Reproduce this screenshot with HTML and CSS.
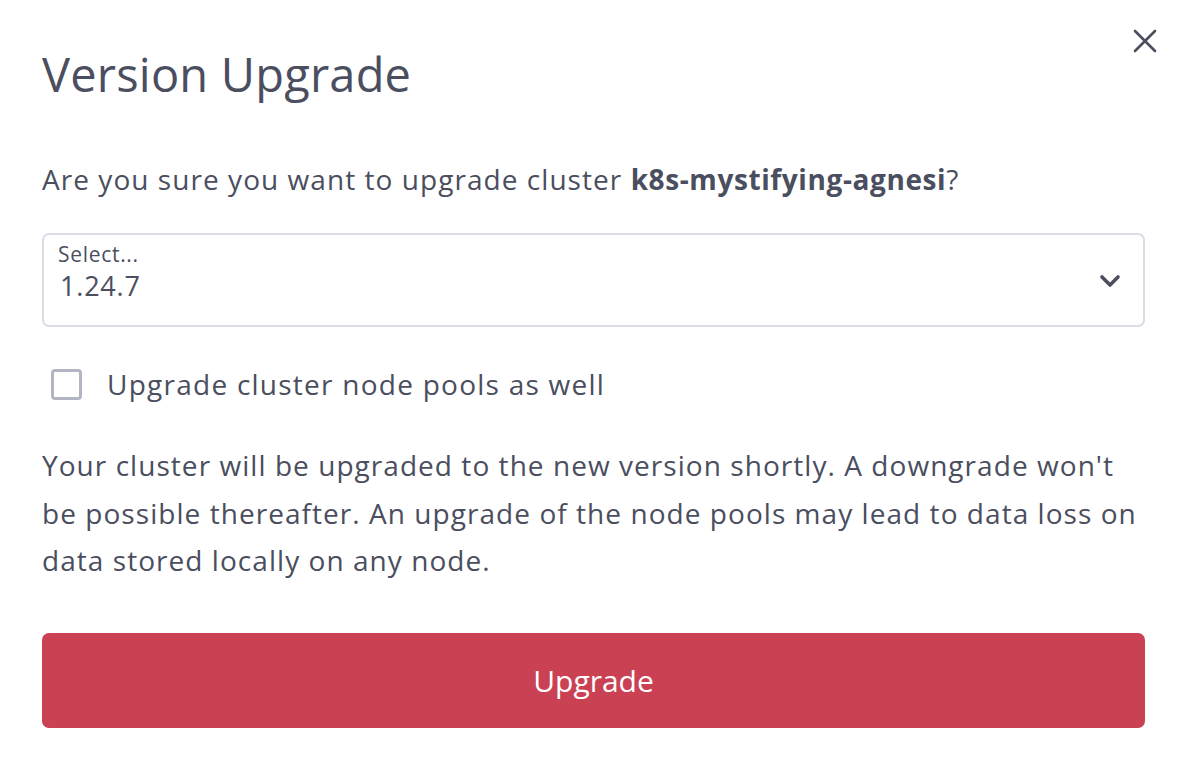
FILE: index.html
```html
<!DOCTYPE html>
<html>
<head>
<meta charset="utf-8">
<link rel="stylesheet" href="styles.css">
</head>
<body>
<div class="modal">
  <button class="close" aria-label="Close">
    <svg width="26" height="26" viewBox="0 0 26 26"><path d="M3 3 L23 23 M23 3 L3 23" stroke="#4a4e5e" stroke-width="2.6" stroke-linecap="round"/></svg>
  </button>
  <h1 class="title">Version Upgrade</h1>
  <p class="question">Are you sure you want to upgrade cluster <strong>k8s-mystifying-agnesi</strong>?</p>
  <div class="select">
    <div class="select-values">
      <span class="select-label">Select...</span>
      <span class="select-value">1.24.7</span>
    </div>
    <svg class="chevron" width="22" height="14" viewBox="0 0 22 14"><path d="M3 3 L11 11 L19 3" fill="none" stroke="#4a4e5e" stroke-width="3.6" stroke-linecap="round" stroke-linejoin="round"/></svg>
  </div>
  <label class="check">
    <span class="box"></span>
    <span class="check-text">Upgrade cluster node pools as well</span>
  </label>
  <p class="info">Your cluster will be upgraded to the new version shortly. A downgrade won't be possible thereafter. An upgrade of the node pools may lead to data loss on data stored locally on any node.</p>
  <button class="upgrade">Upgrade</button>
</div>
</body>
</html>
```
FILE: styles.css
```css
* { box-sizing: border-box; }
html, body { margin: 0; padding: 0; background: #fff; }
body { font-family: "Open Sans", "Noto Sans", sans-serif; color: #4a4e5e; }
.modal {
  position: relative;
  width: 1198px;
  height: 772px;
  padding: 42px 53px 0 42px;
  display: flex;
  flex-direction: column;
}
.close {
  position: absolute;
  top: 28px;
  right: 40px;
  background: none;
  border: 0;
  padding: 0;
  width: 26px;
  height: 26px;
  cursor: pointer;
}
.title {
  margin: 0;
  font-weight: 400;
  font-size: 47px;
  line-height: 64px;
  letter-spacing: 0.2px;
}
.question {
  margin: 53px 0 0;
  font-size: 28px;
  line-height: 40px;
  letter-spacing: 1.05px;
}
.question strong { font-weight: 700; letter-spacing: 0.6px; }
.select {
  margin-top: 34px;
  height: 94px;
  border: 2px solid #dadce6;
  border-radius: 7px;
  display: flex;
  align-items: flex-start;
  justify-content: space-between;
  padding: 7px 22px 0 14px;
}
.select-values { display: flex; flex-direction: column; }
.select-label { font-size: 21px; line-height: 24px; letter-spacing: 0.7px; }
.select-value { margin-top: 4px; font-size: 27px; line-height: 32px; padding-left: 2px; letter-spacing: 0.8px; }
.chevron { align-self: center; margin-top: -6px; }
.check {
  margin-top: 37px;
  display: flex;
  align-items: center;
  gap: 25px;
  padding-left: 9px;
}
.box {
  width: 31px;
  height: 31px;
  border: 3px solid #b3b5c4;
  border-radius: 4px;
}
.check-text { font-size: 28px; line-height: 40px; letter-spacing: 1.25px; }
.info {
  margin: 38px 0 0;
  font-size: 28px;
  line-height: 47.5px;
  letter-spacing: 1.05px;
}
.upgrade {
  margin-top: 48px;
  height: 95px;
  border: 0;
  border-radius: 7px;
  background: #cb4154;
  color: #fff;
  font-family: "Open Sans", sans-serif;
  font-size: 30px;
}
```
